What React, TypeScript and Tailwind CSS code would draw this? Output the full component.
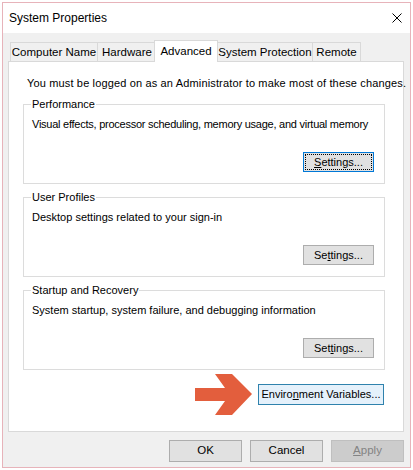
import React from 'react';

const font = { fontFamily: '"Liberation Sans", Arial, sans-serif' };

function Btn({ children, w = 'w-[71px]', focused = false }: { children: React.ReactNode; w?: string; focused?: boolean }) {
  if (focused) {
    return (
      <button className={`${w} h-[20px] border border-[#0078d7] bg-[#e1e1e1] p-[1px] text-[11px] text-black whitespace-nowrap`}>
        <div className="h-full w-full border border-dotted border-black flex items-center justify-center leading-none">{children}</div>
      </button>
    );
  }
  return (
    <button className={`${w} h-[20px] border border-[#adadad] bg-[#e1e1e1] text-[11px] text-black flex items-center justify-center leading-none whitespace-nowrap`}>
      {children}
    </button>
  );
}

function Group({ title, desc, btn, tight = false }: { title: string; desc: string; btn: React.ReactNode; tight?: boolean }) {
  return (
    <fieldset className="w-[362px] min-w-0 border border-[#dcdcdc] pl-[7px] pr-[10px] pb-[11px] flex flex-col">
      <legend className="px-[1px] text-[11px] leading-[14px] text-black whitespace-nowrap">{title}</legend>
      <div className={`mt-[5px] pl-[1px] text-[11px] leading-[16px] text-black whitespace-nowrap ${tight ? 'tracking-[-0.25px]' : ''}`}>{desc}</div>
      <div className="mt-[20px] flex justify-end">{btn}</div>
    </fieldset>
  );
}

const tabs = [
  { label: 'Computer Name', cls: 'w-[88px]' },
  { label: 'Hardware', cls: 'w-[60px] -ml-px' },
  { label: 'Advanced', cls: 'w-[64px] -ml-[3px]', active: true },
  { label: 'System Protection', cls: 'w-[96px] -ml-px' },
  { label: 'Remote', cls: 'w-[49px] -ml-px' },
];

export default function App() {
  return (
    <div className="w-[413px] h-[470px] bg-white pl-[2px] pt-[2px] overflow-hidden" style={font}>
      <div className="w-[409px] h-[466px] border border-[#e7b3ba] bg-[#f0f0f0] flex flex-col">
        {/* title bar */}
        <div className="h-[30px] bg-white flex items-center justify-between pl-[6px] pr-[8px]">
          <span className="text-[12px] text-black">System Properties</span>
          <svg width="10" height="10" viewBox="0 0 10 10">
            <path d="M0.5 0.5 L9.5 9.5 M9.5 0.5 L0.5 9.5" stroke="#000" strokeWidth="1" fill="none" />
          </svg>
        </div>

        <div className="pl-[5px] pt-[7px] flex flex-col">
          {/* tabs */}
          <div className="flex items-end h-[22px] ml-[2px] -mb-px relative z-10">
            {tabs.map((t) =>
              t.active ? (
                <div key={t.label} className={`${t.cls} relative z-10 h-[22px] bg-white border border-b-0 border-[#d9d9d9] flex items-start justify-center pt-[2px] text-[11.5px] leading-[16px] text-black whitespace-nowrap`}>
                  {t.label}
                </div>
              ) : (
                <div key={t.label} className={`${t.cls} h-[19px] mb-px bg-[#f0f0f0] border border-b-0 border-[#d9d9d9] flex items-center justify-center text-[11.5px] leading-[16px] text-black whitespace-nowrap`}>
                  {t.label}
                </div>
              )
            )}
          </div>

          {/* panel */}
          <div className="w-[396px] h-[371px] border border-[#d9d9d9] bg-white pl-[14px] pt-[13px] flex flex-col">
            <div className="ml-[4px] text-[11px] leading-[16px] text-black whitespace-nowrap tracking-[0.15px]">
              You must be logged on as an Administrator to make most of these changes.
            </div>

            <div className="mt-[6px]">
              <Group
                title="Performance"
                desc="Visual effects, processor scheduling, memory usage, and virtual memory"
                tight
                btn={<Btn focused><span><u>S</u>ettings...</span></Btn>}
              />
            </div>
            <div className="mt-[6px]">
              <Group
                title="User Profiles"
                desc="Desktop settings related to your sign-in"
                btn={<Btn><span>Se<u>t</u>tings...</span></Btn>}
              />
            </div>
            <div className="mt-[6px]">
              <Group
                title="Startup and Recovery"
                desc="System startup, system failure, and debugging information"
                btn={<Btn><span>Set<u>t</u>ings...</span></Btn>}
              />
            </div>

            <div className="w-[362px] mt-[4px] flex items-center justify-end gap-[5px] pr-[1px]">
              <svg width="58" height="41" viewBox="0 0 58 41">
                <polygon
                  points="0,14 30,14 20,0 37,0 57,20 37,41 20,41 30,27 0,27"
                  fill="#e35e3d"
                />
              </svg>
              <button className="w-[126px] h-[21px] border border-[#2f82ad] bg-[#e5f1fb] text-[11px] text-black flex items-center justify-center leading-none whitespace-nowrap">
                <span>Enviro<u>n</u>ment Variables...</span>
              </button>
            </div>
          </div>

          {/* bottom buttons */}
          <div className="w-[396px] mt-[8px] flex justify-end gap-[8px]">
            <button className="w-[73px] h-[22px] border border-[#adadad] bg-[#e1e1e1] text-[11.5px] text-black flex items-center justify-center">OK</button>
            <button className="w-[73px] h-[22px] border border-[#adadad] bg-[#e1e1e1] text-[11.5px] text-black flex items-center justify-center">Cancel</button>
            <button className="w-[73px] h-[22px] border border-[#bfbfbf] bg-[#cccccc] text-[11.5px] text-[#838383] flex items-center justify-center">
              <span><u>A</u>pply</span>
            </button>
          </div>
        </div>
      </div>
    </div>
  );
}
